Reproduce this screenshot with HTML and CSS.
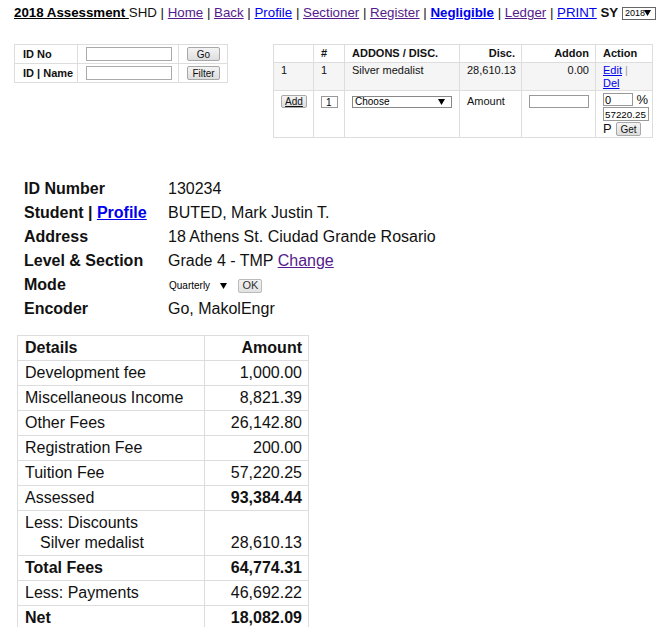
FILE: index.html
```html
<!DOCTYPE html>
<html>
<head>
<meta charset="utf-8">
<title>2018 Assessment</title>
<link rel="stylesheet" href="styles.css">
</head>
<body>
<div class="page">
  <nav class="topbar">
    <a class="brand" href="#">2018 Assessment </a>SHD | <a class="visited" href="#">Home</a> | <a class="visited" href="#">Back</a> | <a class="fresh" href="#">Profile</a> | <a class="visited" href="#">Sectioner</a> | <a class="visited" href="#">Register</a> | <a class="fresh bold" href="#">Negligible</a> | <a class="visited" href="#">Ledger</a> | <a class="fresh" href="#">PRINT</a> <b>SY</b> <select class="dd dd-sy"><option>2018</option></select>
  </nav>

  <div class="forms">
    <table class="search">
      <tr>
        <th class="s-lab">ID No</th>
        <td class="s-inp"><input class="txt txt-search" type="text"></td>
        <td class="s-btn"><button class="btn btn-search">Go</button></td>
      </tr>
      <tr>
        <th class="s-lab">ID | Name</th>
        <td class="s-inp"><input class="txt txt-search" type="text"></td>
        <td class="s-btn"><button class="btn btn-search">Filter</button></td>
      </tr>
    </table>

    <table class="addons">
      <colgroup>
        <col class="c1"><col class="c2"><col class="c3"><col class="c4"><col class="c5"><col class="c6">
      </colgroup>
      <tr class="a-head">
        <th></th>
        <th>#</th>
        <th>ADDONS / DISC.</th>
        <th class="r">Disc.</th>
        <th class="r">Addon</th>
        <th>Action</th>
      </tr>
      <tr class="a-row">
        <td>1</td>
        <td>1</td>
        <td>Silver medalist</td>
        <td class="r">28,610.13</td>
        <td class="r">0.00</td>
        <td><a class="fresh" href="#">Edit</a> <span class="pipe">|</span> <a class="fresh" href="#">Del</a></td>
      </tr>
      <tr class="a-new">
        <td><button class="btn btn-add"><u>Add</u></button></td>
        <td><input class="txt txt-num" type="text" value="1"></td>
        <td><select class="dd dd-choose"><option>Choose</option></select></td>
        <td class="amount">Amount</td>
        <td><input class="txt txt-addon" type="text"></td>
        <td class="act">
          <div class="act-line act-first"><input class="txt txt-pct" type="text" value="0"> %</div>
          <div class="act-line"><input class="txt txt-val" type="text" value="57220.25"></div>
          <div class="act-line">P <button class="btn btn-get">Get</button></div>
        </td>
      </tr>
    </table>
  </div>

  <table class="info">
    <tr><th>ID Number</th><td>130234</td></tr>
    <tr><th>Student | <a class="fresh" href="#">Profile</a></th><td>BUTED, Mark Justin T.</td></tr>
    <tr><th>Address</th><td>18 Athens St. Ciudad Grande Rosario</td></tr>
    <tr><th>Level &amp; Section</th><td>Grade 4 - TMP <a class="visited" href="#">Change</a></td></tr>
    <tr><th>Mode</th><td><select class="dd dd-mode"><option>Quarterly</option></select> <button class="btn btn-ok">OK</button></td></tr>
    <tr><th>Encoder</th><td>Go, MakolEngr</td></tr>
  </table>

  <table class="details">
    <tr><th>Details</th><th class="r">Amount</th></tr>
    <tr><td>Development fee</td><td class="r">1,000.00</td></tr>
    <tr><td>Miscellaneous Income</td><td class="r">8,821.39</td></tr>
    <tr><td>Other Fees</td><td class="r">26,142.80</td></tr>
    <tr><td>Registration Fee</td><td class="r">200.00</td></tr>
    <tr><td>Tuition Fee</td><td class="r">57,220.25</td></tr>
    <tr><td>Assessed</td><td class="r"><b>93,384.44</b></td></tr>
    <tr><td>Less: Discounts<br><span class="indent">Silver medalist</span></td><td class="r bottom"><br>28,610.13</td></tr>
    <tr><th>Total Fees</th><td class="r"><b>64,774.31</b></td></tr>
    <tr><td>Less: Payments</td><td class="r">46,692.22</td></tr>
    <tr><th>Net</th><td class="r"><b>18,082.09</b></td></tr>
  </table>
</div>
</body>
</html>
```

FILE: styles.css
```css
html, body {
  margin: 0;
  padding: 0;
  background: #fff;
}

body {
  font-family: "Liberation Sans", Arial, sans-serif;
  color: #111;
}

.page {
  padding: 5px 14px 0 14px;
}

a.visited { color: #551a8b; }
a.fresh { color: #0000ee; }
a.bold { font-weight: bold; }

.r { text-align: right; }

/* ---------- top bar ---------- */
.topbar {
  font-size: 13.3px;
  line-height: 15px;
  white-space: nowrap;
}

.topbar .brand {
  color: #000;
  font-weight: bold;
}

/* ---------- dropdowns ---------- */
.dd {
  -webkit-appearance: none;
  appearance: none;
  font-family: "Liberation Sans", Arial, sans-serif;
  font-size: 10px;
  color: #000;
  margin: 0;
  border-radius: 0;
  background-color: #fff;
  background-image: url("data:image/svg+xml,%3Csvg xmlns='http://www.w3.org/2000/svg' width='7' height='6'%3E%3Cpath d='M0 0h7L3.5 6z' fill='%23000'/%3E%3C/svg%3E");
  background-repeat: no-repeat;
  vertical-align: middle;
}

.dd-sy {
  width: 34px;
  height: 13px;
  padding: 0 0 0 2px;
  border: 1px solid #666;
  background-position: right 4px center;
  font-size: 9px;
  line-height: 11px;
  margin-left: 0;
}

.dd-choose {
  width: 100px;
  height: 12px;
  padding: 0 0 0 2px;
  border: 1px solid #888;
  background-position: right 6px center;
  line-height: 10px;
  display: block;
  margin-top: 2px;
}

.dd-mode {
  width: 62px;
  height: 14px;
  padding: 0 0 0 1px;
  border: none;
  background-position: right 3px center;
  line-height: 12px;
}

/* ---------- inputs & buttons ---------- */
.txt {
  font-family: "Liberation Sans", Arial, sans-serif;
  font-size: 11px;
  color: #000;
  border: 1px solid #999;
  margin: 0;
  padding: 0 2px;
  box-sizing: border-box;
  background: #fff;
  border-radius: 0;
}

.btn {
  font-family: "Liberation Sans", Arial, sans-serif;
  font-size: 10px;
  color: #111;
  margin: 0;
  padding: 0;
  box-sizing: border-box;
  border: 1px solid #a8a8a8;
  border-radius: 2px;
  background: linear-gradient(#f4f4f4, #dedede);
  line-height: 11px;
}

/* ---------- forms row ---------- */
.forms {
  display: flex;
  align-items: flex-start;
  gap: 45px;
  margin-top: 24px;
}

.search,
.addons,
.details {
  border-collapse: collapse;
}

.search {
  width: 213px;
  font-size: 11px;
  table-layout: fixed;
}

.search th,
.search td {
  border: 1px solid #ddd;
  height: 19px;
  padding: 0 7px 0 8px;
  text-align: left;
  vertical-align: middle;
  white-space: nowrap;
}

.search th.s-lab { width: 63px; padding: 0 0 0 8px; box-sizing: border-box; }
.search td.s-inp { width: 101px; box-sizing: border-box; }
.search td.s-btn { width: 49px; box-sizing: border-box; }

.txt-search {
  width: 86px;
  height: 14px;
  display: block;
  border-color: #aaa;
}

.btn-search {
  width: 33px;
  height: 14px;
  display: block;
}

/* ---------- add-ons table ---------- */
.addons {
  width: 379px;
  font-size: 11px;
  line-height: 13px;
  table-layout: fixed;
}

.addons .c1 { width: 40px; }
.addons .c2 { width: 31px; }
.addons .c3 { width: 115px; }
.addons .c4 { width: 62px; }
.addons .c5 { width: 74px; }
.addons .c6 { width: 57px; }

.addons th,
.addons td {
  border: 1px solid #ddd;
  padding: 2px 6px 2px 7px;
  text-align: left;
  vertical-align: top;
}

.addons th.r,
.addons td.r { text-align: right; }

.addons .a-row td {
  background: #f5f5f5;
  padding-top: 1px;
  padding-bottom: 0;
}

.addons .pipe { color: #99a; }

.addons .a-new td {
  padding-top: 3px;
  padding-bottom: 0;
}

.addons .a-new td.amount {
  padding-top: 4px;
}

.btn-add {
  width: 26px;
  height: 13px;
  display: block;
  margin-top: 1px;
}

.txt-num {
  width: 17px;
  height: 12px;
  display: block;
  margin-top: 2px;
  padding: 0 0 0 4px;
  font-size: 10px;
  line-height: 10px;
}

.txt-addon {
  width: 60px;
  height: 13px;
  display: block;
  margin-top: 1px;
}

.addons .a-new td.act {
  padding: 2px 1px 0 7px;
}

.act-line {
  height: 15px;
  line-height: 14px;
  white-space: nowrap;
  font-size: 13px;
}

.act-line.act-first {
  height: 14px;
}

.txt-pct {
  width: 30px;
  height: 13px;
  vertical-align: top;
  padding: 0 1px;
}

.txt-val {
  width: 46px;
  height: 14px;
  vertical-align: top;
  padding: 0 0 0 1px;
  font-size: 9.8px;
}

.btn-get {
  width: 25px;
  height: 14px;
  vertical-align: top;
  margin-left: 1px;
  font-size: 10px;
}

/* ---------- student info ---------- */
.info {
  border-collapse: collapse;
  margin: 39px 0 0 10px;
  font-size: 16px;
  line-height: 20px;
}

.info th,
.info td {
  padding: 2px 0;
  text-align: left;
  vertical-align: middle;
  white-space: nowrap;
}

.info th {
  width: 144px;
  font-weight: bold;
}

.btn-ok {
  width: 24px;
  height: 14px;
  font-size: 11px;
  vertical-align: middle;
  margin-left: 4px;
  border-color: #bbb;
  background: linear-gradient(#f2f2f2, #e2e2e2);
  color: #333;
}

/* ---------- details table ---------- */
.details {
  width: 292px;
  margin: 14px 0 0 3px;
  font-size: 16px;
  line-height: 20px;
}

.details th,
.details td {
  border: 1px solid #ddd;
  padding: 2px 6px 2px 7px;
  text-align: left;
  vertical-align: middle;
}

.details th { font-weight: bold; }

.details th.r,
.details td.r { text-align: right; }

.details tr > :first-child { width: 173px; }

.details .indent {
  padding-left: 15px;
}
```
